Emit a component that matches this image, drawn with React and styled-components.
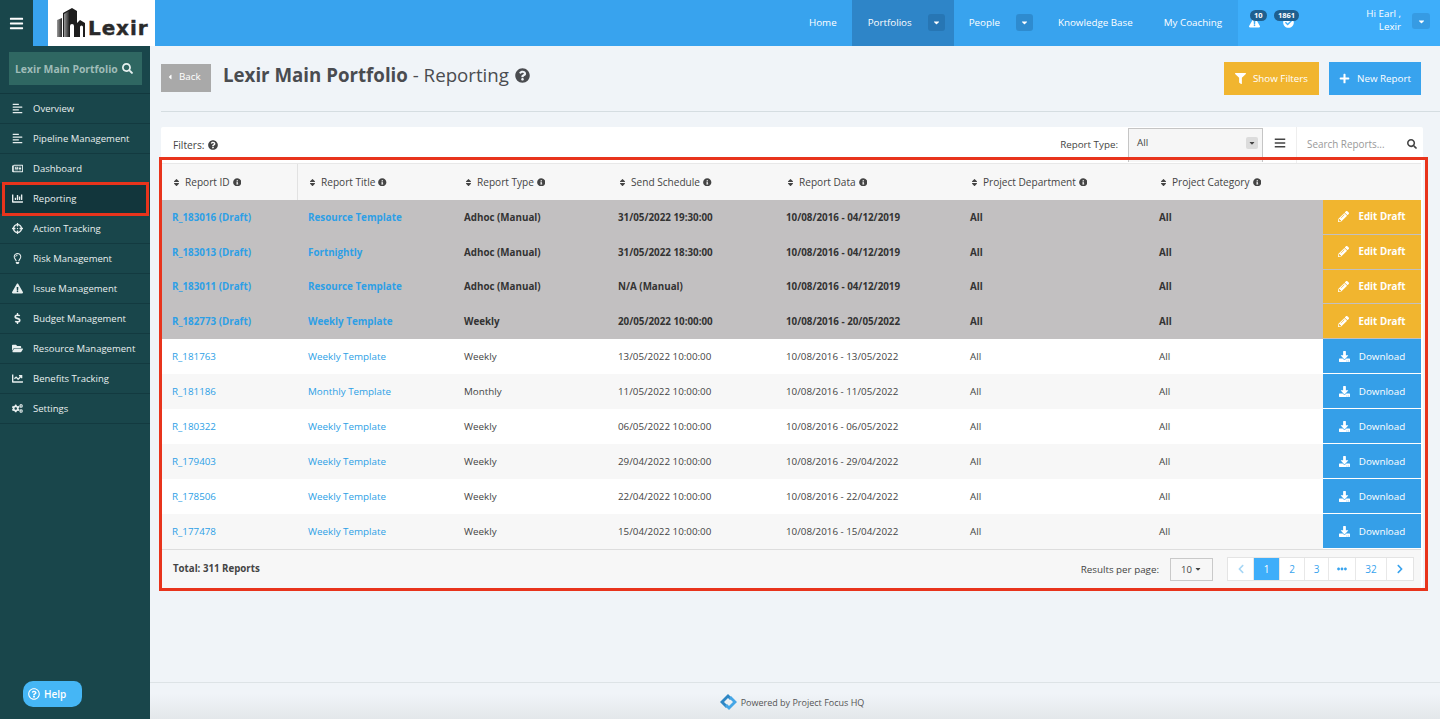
import React from "react";
import styled, { createGlobalStyle } from "styled-components";
import {
  FaBars, FaSearch, FaAlignLeft, FaRegNewspaper, FaChartBar, FaCrosshairs, FaRegLightbulb,
  FaExclamationTriangle, FaDollarSign, FaFolderOpen, FaChartLine, FaCogs, FaCaretDown, FaCaretLeft,
  FaQuestionCircle, FaRegQuestionCircle, FaFilter, FaPlus, FaSort, FaInfoCircle, FaPencilAlt,
  FaDownload, FaChevronLeft, FaChevronRight, FaEllipsisH, FaCheckCircle,
} from "react-icons/fa";

const GlobalStyle = createGlobalStyle`
  html, body { margin: 0; padding: 0; height: 100%; overflow: hidden; }
  body { font-family: "Open Sans", "Noto Sans", sans-serif; font-size: 9.8px; color: #444; background: #f0f4f8; }
  * { box-sizing: border-box; }
`;

const Shell = styled.div`
  width: 1440px; height: 719px; display: flex; flex-direction: column; position: relative; overflow: hidden;
`;

const TopBar = styled.header`
  height: 46px; flex: none; display: flex; background: #38a3ee; color: #fff;
`;
const Burger = styled.div`
  width: 33px; background: #19464b; display: flex; align-items: center; justify-content: center;
  font-size: 15px; margin-right: 15px;
`;
const LogoBox = styled.div`
  width: 107px; background: #fff; display: flex; align-items: flex-start; padding: 7px 0 0 9px;
`;
const LogoWord = styled.span`
  font-family: "DejaVu Sans", sans-serif; font-weight: 700; font-size: 20px; line-height: 20px; color: #2a2a2a;
  letter-spacing: 0.9px; margin: 11px 0 0 3px; -webkit-text-stroke: 0.4px #2a2a2a;
`;
const TopNav = styled.nav`
  margin-left: auto; display: flex; align-items: stretch;
`;
const TopLink = styled.div`
  display: flex; align-items: center; padding: 0 ${(p) => p.$pr ?? 15}px 2px ${(p) => p.$pl ?? 15}px;
  background: ${(p) => (p.$active ? "#2e85c8" : "transparent")};
  white-space: nowrap; font-size: 9.8px;
`;
const CaretBox = styled.span`
  width: 17px; height: 17px; border-radius: 3px; background: rgba(22, 80, 130, 0.28);
  display: inline-flex; align-items: center; justify-content: center; font-size: 9px; color: #fff;
  margin-left: 16px;
`;
const TopRight = styled.div`
  width: 202px; background: #3eaefa; display: flex; position: relative; align-items: flex-start;
`;
const AlertIcon = styled.span`
  font-size: 11px; position: absolute; top: 17px; left: ${(p) => p.$x}px; display: flex;
`;
const Badge = styled.span`
  position: absolute; top: 10px; left: ${(p) => p.$x}px; height: 11px; padding: 0 4px; border-radius: 7px;
  background: #1f5f8e; font-size: 7.5px; font-weight: 700; line-height: 11px; color: #fff;
`;
const Greeting = styled.div`
  position: absolute; right: 39px; top: 7px; text-align: right; line-height: 13px; font-size: 9.8px;
`;
const GreetCaret = styled(CaretBox)`
  position: absolute; right: 10px; top: 13px; margin: 0; height: 16px; width: 18px;
  background: rgba(30, 100, 160, 0.25);
`;

const Body = styled.div`
  flex: 1; display: flex; min-height: 0;
`;
const Sidebar = styled.aside`
  width: 150px; flex: none; background: #19464b; color: #e8efef; position: relative; font-size: 9.5px;
`;
const SearchWrap = styled.div`
  height: 48px; padding: 6px 8px 9px 9px; border-bottom: 1px solid #12383e;
`;
const SideSearch = styled.div`
  height: 33px; background: #2f6762; display: flex; align-items: center; justify-content: space-between;
  padding: 0 9px 0 6px; font-weight: 700; color: #9fbcb8; font-size: 10.4px; white-space: nowrap;
  svg { color: #e6f0ef; font-size: 11px; }
`;
const SideItem = styled.div`
  height: 30px; display: flex; align-items: center; border-bottom: 1px solid #133a40; position: relative;
  padding-bottom: 1px;
  background: ${(p) => (p.$active ? "#12363c" : "transparent")};
  ${(p) => p.$active && `
    &::after { content: ""; position: absolute; left: 2px; right: 1px; top: -2px; bottom: -3px;
      border: 3px solid #e8341c; pointer-events: none; }
  `}
`;
const SideIcon = styled.span`
  width: 33px; flex: none; display: flex; justify-content: center; padding-left: 2px; font-size: 11px; color: #e8efef;
`;
const HelpBtn = styled.div`
  position: absolute; left: 23px; top: 635px; width: 59px; height: 26px; background: #45b6f5;
  border-radius: 10px 8px 10px 10px; color: #fff; display: flex; align-items: center; gap: 4px;
  padding-left: 5px; font-size: 10px; font-weight: 600;
  svg { font-size: 12px; }
`;

const Main = styled.main`
  flex: 1; display: flex; flex-direction: column; min-width: 0;
`;
const Content = styled.div`
  flex: 1; padding: 0 17px 0 11px;
`;
const PageHead = styled.div`
  height: 66px; display: flex; align-items: flex-start; border-bottom: 1px solid #d5dde1; margin-right: -17px;
  padding-top: 16px; padding-right: 19px;
`;
const BackBtn = styled.div`
  width: 50px; height: 28px; background: #a9a9a9; color: #fff; display: flex; align-items: center;
  gap: 5px; padding: 0 0 3px 5px; font-size: 9.8px; margin-top: 2px;
  svg { font-size: 8px; }
`;
const Title = styled.h1`
  margin: -1px 0 0 12px; font-size: 18.7px; line-height: 28px; font-weight: 400; color: #4a4c50; flex: 1;
  display: flex; align-items: center; white-space: pre;
  b { font-weight: 700; }
  svg { margin-left: 6px; font-size: 15px; }
`;
const ActionBtn = styled.div`
  height: 33px; width: ${(p) => p.$w}px; background: ${(p) => p.$bg}; color: #fff; margin-left: 10px;
  display: flex; align-items: center; justify-content: center; gap: 7px; font-size: 9.8px; padding-bottom: 1px;
  svg { font-size: 11px; }
`;

const Card = styled.section`
  margin-top: 15px; width: 1262px; background: #fff; border-radius: 2px;
`;
const FilterBar = styled.div`
  height: 36px; display: flex; align-items: stretch; padding-left: 12px;
`;
const FiltersLabel = styled.div`
  display: flex; align-items: center; gap: 4px; color: #444; font-size: 10.2px;
  svg { font-size: 10px; }
`;
const TypeLabel = styled.div`
  margin-left: auto; display: flex; align-items: center; margin-right: 10px; padding-bottom: 2px;
`;
const TypeSelect = styled.div`
  width: 135px; height: 34px; margin-top: 1px; border: 1px solid #c5c5c5; border-bottom: none; padding: 0 4px 6px 8px;
  background: #f6f6f6; display: flex; align-items: center; justify-content: space-between; font-size: 9.8px;
`;
const SelectCaret = styled.span`
  width: 12px; height: 12px; background: #dcdcdc; border-radius: 2px; display: flex; align-items: center;
  justify-content: center; font-size: 8px;
`;
const ListBtn = styled.div`
  width: 34px; display: flex; align-items: center; justify-content: center; font-size: 12px; padding-bottom: 4px;
  border-right: 1px solid #eee;
`;
const SearchBox = styled.div`
  width: 126px; display: flex; align-items: center; justify-content: space-between; padding: 0 6px 2px 10px;
  color: #999; font-size: 9.9px;
  svg { color: #444; font-size: 10px; }
`;

const TableFrame = styled.div`
  position: relative; padding-left: 1px;
  &::after { content: ""; position: absolute; left: -2px; right: -5px; top: -6px; bottom: -3px;
    border: 3px solid #e8341c; pointer-events: none; }
`;
const cols = "136px 156px 154px 168px 184px 189px 174px 98px";
const HeadRow = styled.div`
  display: grid; grid-template-columns: ${cols}; height: 37px; background: #f7f7f7; border-top: 1px solid #e8e8e8;
  width: 1259px; font-size: 10.1px;
`;
const HeadCell = styled.div`
  display: flex; align-items: center; padding-left: 10px; color: #444; white-space: nowrap;
  border-right: ${(p) => (p.$divider ? "1px solid #e2e2e2" : "none")};
  > svg:first-child { font-size: 9px; margin-right: 4px; }
  > svg:last-child:not(:first-child) { font-size: 8.5px; margin-left: 3px; }
`;
const Row = styled.div`
  display: grid; grid-template-columns: ${cols}; width: 1259px; height: ${(p) => (p.$draft ? 34.75 : 35)}px;
  background: ${(p) => (p.$draft ? "#c2c0c1" : p.$alt ? "#f7f7f7" : "#fff")};
  font-weight: ${(p) => (p.$draft ? 700 : 400)};
  color: ${(p) => (p.$draft ? "#333" : "#444")};
`;
const Cell = styled.div`
  display: flex; align-items: center; padding-left: 10px; white-space: nowrap;
`;
const RowLink = styled(Cell)`
  color: #2d9fe6;
`;
const RowBtn = styled.div`
  display: flex; align-items: center; justify-content: center; gap: 9px; color: #fff;
  background: ${(p) => (p.$draft ? "#f1b52f" : "#359fe8")};
  border-bottom: 1px solid ${(p) => (p.$draft ? "#c2c0c1" : "#fff")};
  svg { font-size: 11px; }
`;
const TableFoot = styled.div`
  height: 39px; width: 1259px; display: flex; align-items: center; background: #f7f7f7; border-top: 1px solid #ddd;
  padding-left: 11px;
`;
const Total = styled.div`
  font-weight: 700; flex: 1; padding-bottom: 2px; color: #444; font-size: 9.7px;
`;
const PerLabel = styled.div`
  margin-right: 11px;
`;
const PerSelect = styled.div`
  width: 43px; height: 23px; border: 1px solid #c9c9c9; background: #f7f7f7; display: flex; align-items: center;
  justify-content: center; gap: 2px; font-size: 9.5px; margin-right: 14px;
  svg { font-size: 8px; }
`;
const Pager = styled.div`
  display: flex; height: 24px; margin-right: 7px; border: 1px solid #e4e4e4; background: #fff;
`;
const PageBtn = styled.div`
  width: ${(p) => p.$w}px; display: flex; align-items: center; justify-content: center; font-size: 10px;
  color: ${(p) => (p.$on ? "#fff" : p.$muted ? "#a6d6f5" : "#38a3ee")};
  background: ${(p) => (p.$on ? "#3eaefa" : "#fff")};
  border-right: ${(p) => (p.$last ? "none" : "1px solid #e8e8e8")};
  svg { font-size: 10px; }
`;

const Foot = styled.footer`
  height: 37px; flex: none; border-top: 1px solid #dde3e6; display: flex; align-items: center; justify-content: center;
  background: linear-gradient(#f0f4f8 30%, #e3e7ea); gap: 3px; font-size: 9px; color: #555; padding: 2px 7px 0 0;
`;

const navItems = [
  [FaAlignLeft, "Overview"], [FaAlignLeft, "Pipeline Management"], [FaRegNewspaper, "Dashboard"],
  [FaChartBar, "Reporting", true], [FaCrosshairs, "Action Tracking"], [FaRegLightbulb, "Risk Management"],
  [FaExclamationTriangle, "Issue Management"], [FaDollarSign, "Budget Management"],
  [FaFolderOpen, "Resource Management"], [FaChartLine, "Benefits Tracking"], [FaCogs, "Settings"],
];
const heads = ["Report ID", "Report Title", "Report Type", "Send Schedule", "Report Data", "Project Department", "Project Category"];
const rows = [
  ["R_183016 (Draft)", "Resource Template", "Adhoc (Manual)", "31/05/2022 19:30:00", "10/08/2016 - 04/12/2019", true],
  ["R_183013 (Draft)", "Fortnightly", "Adhoc (Manual)", "31/05/2022 18:30:00", "10/08/2016 - 04/12/2019", true],
  ["R_183011 (Draft)", "Resource Template", "Adhoc (Manual)", "N/A (Manual)", "10/08/2016 - 04/12/2019", true],
  ["R_182773 (Draft)", "Weekly Template", "Weekly", "20/05/2022 10:00:00", "10/08/2016 - 20/05/2022", true],
  ["R_181763", "Weekly Template", "Weekly", "13/05/2022 10:00:00", "10/08/2016 - 13/05/2022"],
  ["R_181186", "Monthly Template", "Monthly", "11/05/2022 10:00:00", "10/08/2016 - 11/05/2022"],
  ["R_180322", "Weekly Template", "Weekly", "06/05/2022 10:00:00", "10/08/2016 - 06/05/2022"],
  ["R_179403", "Weekly Template", "Weekly", "29/04/2022 10:00:00", "10/08/2016 - 29/04/2022"],
  ["R_178506", "Weekly Template", "Weekly", "22/04/2022 10:00:00", "10/08/2016 - 22/04/2022"],
  ["R_177478", "Weekly Template", "Weekly", "15/04/2022 10:00:00", "10/08/2016 - 15/04/2022"],
];

const LogoMark = () => (
  <svg width="28" height="30" viewBox="0 0 28 30" style={{ flex: "none" }}>
    <defs>
      <linearGradient id="bld" x1="0" y1="0" x2="1" y2="0">
        <stop offset="0" stopColor="#9a9a9a" />
        <stop offset="1" stopColor="#2a2a2a" />
      </linearGradient>
    </defs>
    <path d="M0 30V13l5-2v19z" fill="url(#bld)" />
    <path d="M6 30V6l9-5 5 3v26h-3V19a2 2 0 0 0-4 0v11z" fill="#1d1d1d" />
    <path d="M7 30V7l5-3v26z" fill="url(#bld)" />
    <path d="M20 30V16l3-3 5 3v14h-2V20a1.500 1.500 0 0 0-3 0v10z" fill="#1d1d1d" />
  </svg>
);
const FooterMark = () => (
  <svg width="19" height="18" viewBox="0 0 19 18">
    <path d="M1 9l8-8 4 4-2 2-2-2-4 4 4 4-2 2z" fill="#2d86c4" />
    <path d="M18 9l-8 8-4-4 2-2 2 2 4-4-4-4 2-2z" fill="#45a6e6" />
  </svg>
);

export default function App() {
  return (
    <Shell>
      <GlobalStyle />
      <TopBar>
        <Burger><FaBars /></Burger>
        <LogoBox><LogoMark /><LogoWord>Lexir</LogoWord></LogoBox>
        <TopNav>
          <TopLink>Home</TopLink>
          <TopLink $active $pl={16} $pr={9}>Portfolios<CaretBox><FaCaretDown /></CaretBox></TopLink>
          <TopLink $pr={10}>People<CaretBox><FaCaretDown /></CaretBox></TopLink>
          <TopLink $pr={16}>Knowledge Base</TopLink>
          <TopLink $pr={16}>My Coaching</TopLink>
        </TopNav>
        <TopRight>
          <AlertIcon $x={11}><FaExclamationTriangle /></AlertIcon>
          <AlertIcon $x={45}><FaCheckCircle /></AlertIcon>
          <Badge $x={12}>10</Badge>
          <Badge $x={36}>1861</Badge>
          <Greeting>Hi Earl ,<br />Lexir</Greeting>
          <GreetCaret><FaCaretDown /></GreetCaret>
        </TopRight>
      </TopBar>
      <Body>
        <Sidebar>
          <SearchWrap>
            <SideSearch>Lexir Main Portfolio <FaSearch /></SideSearch>
          </SearchWrap>
          {navItems.map(([Icon, label, active]) => (
            <SideItem key={label} $active={active}>
              <SideIcon><Icon /></SideIcon>{label}
            </SideItem>
          ))}
          <HelpBtn><FaRegQuestionCircle />Help</HelpBtn>
        </Sidebar>
        <Main>
          <Content>
            <PageHead>
              <BackBtn><FaCaretLeft />Back</BackBtn>
              <Title><b>Lexir Main Portfolio</b> - Reporting<FaQuestionCircle /></Title>
              <ActionBtn $w={95} $bg="#f1b52f"><FaFilter />Show Filters</ActionBtn>
              <ActionBtn $w={92} $bg="#38a3ee"><FaPlus />New Report</ActionBtn>
            </PageHead>
            <Card>
              <FilterBar>
                <FiltersLabel>Filters: <FaQuestionCircle /></FiltersLabel>
                <TypeLabel>Report Type:</TypeLabel>
                <TypeSelect>All<SelectCaret><FaCaretDown /></SelectCaret></TypeSelect>
                <ListBtn><FaBars /></ListBtn>
                <SearchBox>Search Reports...<FaSearch /></SearchBox>
              </FilterBar>
              <TableFrame>
                <HeadRow>
                  {heads.map((h, i) => (
                    <HeadCell key={h} $divider={i === 0}><FaSort />{h}<FaInfoCircle /></HeadCell>
                  ))}
                  <HeadCell />
                </HeadRow>
                {rows.map(([id, title, type, sched, data, draft], i) => (
                  <Row key={id} $draft={draft} $alt={i % 2 === 1}>
                    <RowLink>{id}</RowLink>
                    <RowLink>{title}</RowLink>
                    <Cell>{type}</Cell>
                    <Cell>{sched}</Cell>
                    <Cell>{data}</Cell>
                    <Cell>All</Cell>
                    <Cell>All</Cell>
                    <RowBtn $draft={draft}>
                      {draft ? <FaPencilAlt /> : <FaDownload />}
                      {draft ? "Edit Draft" : "Download"}
                    </RowBtn>
                  </Row>
                ))}
                <TableFoot>
                  <Total>Total: 311 Reports</Total>
                  <PerLabel>Results per page:</PerLabel>
                  <PerSelect>10 <FaCaretDown /></PerSelect>
                  <Pager>
                    <PageBtn $w={26} $muted><FaChevronLeft /></PageBtn>
                    <PageBtn $w={26} $on>1</PageBtn>
                    <PageBtn $w={25}>2</PageBtn>
                    <PageBtn $w={24}>3</PageBtn>
                    <PageBtn $w={27}><FaEllipsisH /></PageBtn>
                    <PageBtn $w={31}>32</PageBtn>
                    <PageBtn $w={26} $last><FaChevronRight /></PageBtn>
                  </Pager>
                </TableFoot>
              </TableFrame>
            </Card>
          </Content>
          <Foot><FooterMark />Powered by Project Focus HQ</Foot>
        </Main>
      </Body>
    </Shell>
  );
}
